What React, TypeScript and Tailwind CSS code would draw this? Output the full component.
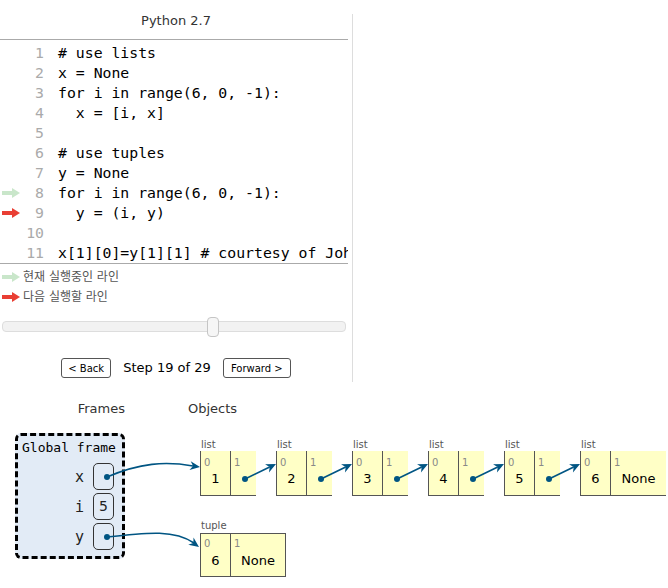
import React from "react";

const GREEN = "#c9e6ca";
const RED = "#e93f34";
const LINK = "#005583";

const codeLines = [
  "# use lists",
  "x = None",
  "for i in range(6, 0, -1):",
  "  x = [i, x]",
  "",
  "# use tuples",
  "y = None",
  "for i in range(6, 0, -1):",
  "  y = (i, y)",
  "",
  "x[1][0]=y[1][1] # courtesy of John DeNero",
];

// little arrow used in the gutter and the legend
const LineArrow = ({ color }: { color: string }) => (
  <svg width="18" height="10" viewBox="0 0 18 10">
    <rect x="0" y="3" width="11" height="4" fill={color} />
    <polygon points="10,0 18,5 10,10" fill={color} />
  </svg>
);

// arrowhead polygon, tip at (x, y), pointing along ang
const head = (x: number, y: number, ang: number) => {
  const c = Math.cos(ang);
  const s = Math.sin(ang);
  const p = (dx: number, dy: number) => `${x + dx * c - dy * s},${y + dx * s + dy * c}`;
  return `${p(0, 0)} ${p(-10, -4.5)} ${p(-7, 0)} ${p(-10, 4.5)}`;
};

const ListBox = ({ value, last }: { value: number; last?: boolean }) => (
  <div className="flex flex-col">
    <div className="h-[12px] pl-[1px] text-[10px] leading-[12px] text-[#555]">list</div>
    <div className="flex">
      <div className="box-border h-[45px] w-[30px] border-b border-l border-[#555] bg-[#ffffc6] pl-[3px] pt-[6px]">
        <div className="text-[10px] leading-[12px] text-[#888]">0</div>
        <div className="mt-[2px] pr-[3px] text-center text-[13px] leading-[16px] text-black">{value}</div>
      </div>
      <div
        className={
          last
            ? "box-border h-[45px] w-[56px] border-b border-l border-[#555] bg-[#ffffc6] pl-[3px] pt-[6px]"
            : "box-border h-[45px] w-[26px] border-b border-l border-[#555] bg-[#ffffc6] pl-[3px] pt-[6px]"
        }
      >
        <div className="text-[10px] leading-[12px] text-[#888]">1</div>
        {last && (
          <div className="mt-[2px] pr-[3px] text-center text-[13px] leading-[16px] text-black">None</div>
        )}
      </div>
    </div>
  </div>
);

const VarRow = ({ name, children }: { name: string; children?: React.ReactNode }) => (
  <div className="flex h-[27px] items-center justify-end">
    <div className="pr-[9px] font-['DejaVu_Sans_Mono',monospace] text-[15px] leading-[20px]">{name}</div>
    <div className="box-border flex h-[27px] w-[21px] items-center justify-center rounded-[5px] border border-[#333] text-[14px]">
      {children}
    </div>
  </div>
);

const App: React.FC = () => {
  const listXs = [200, 276, 352, 428, 504];

  return (
    <div className="relative h-[588px] w-[668px] overflow-hidden bg-white font-['DejaVu_Sans',Verdana,sans-serif] text-[#222]">
      {/* Code panel */}
      <div className="mt-[14px] w-[353px] border-r border-[#ddd] pb-[3px]">
        <div className="h-[25px] text-center text-[13px] leading-[13px] text-[#333]">Python 2.7</div>

        <div className="w-[348px] overflow-hidden border-y border-[#aaa] pt-[3px] font-['DejaVu_Sans_Mono',monospace] text-[14.8px]">
          {codeLines.map((ln, i) => (
            <div key={i} className="flex h-[20px] items-center whitespace-pre leading-[20px]">
              <div className="flex w-[22px] shrink-0 pl-[2px]">
                {i === 7 && <LineArrow color={GREEN} />}
                {i === 8 && <LineArrow color={RED} />}
              </div>
              <div className="w-[22px] shrink-0 text-right text-[#aaa]">{i + 1}</div>
              <div className="pl-[14px] text-black">{ln}</div>
            </div>
          ))}
        </div>

        {/* Legend */}
        <div className="mt-[3px] font-['DejaVu_Sans','Noto_Sans_CJK_KR',sans-serif] text-[12px] text-[#555]">
          <div className="flex h-[20px] items-center pl-[2px]">
            <LineArrow color={GREEN} />
            <span className="ml-[3px]">현재 실행중인 라인</span>
          </div>
          <div className="flex h-[20px] items-center pl-[2px]">
            <LineArrow color={RED} />
            <span className="ml-[3px]">다음 실행할 라인</span>
          </div>
        </div>

        {/* Slider */}
        <div className="relative mx-[2px] mt-[10px] h-[20px] w-[344px]">
          <div className="absolute left-0 right-0 top-[4px] h-[11px] rounded-[4px] border border-[#ddd] bg-[#f2f2f2]" />
          <div className="absolute left-[205px] top-0 h-[20px] w-[12px] rounded-[4px] border border-[#c5c5c5] bg-[#f6f6f6]" />
        </div>

        {/* Navigation */}
        <div className="mt-[20px] flex h-[22px] items-center justify-center gap-[12px]">
          <button className="h-[20px] w-[50px] rounded-[3px] border border-[#555] bg-white text-[10px] text-black">
            &lt; Back
          </button>
          <span className="text-[13px] text-black">Step 19 of 29</span>
          <button className="h-[20px] w-[68px] rounded-[3px] border border-[#555] bg-white text-[10px] text-black">
            Forward &gt;
          </button>
        </div>
      </div>

      {/* Frames and objects */}
      <div className="flex pt-[19px]">
        <div className="w-[125px] shrink-0 pl-[15px]">
          <div className="text-right text-[13px] leading-[16px] text-[#333]">Frames</div>
          <div className="mt-[16px] box-border rounded-[6px] border-[3px] border-dashed border-black bg-[#e2ebf6] pb-[6px] pl-[4px] pr-[8px] pt-[4px]">
            <div className="whitespace-nowrap font-['DejaVu_Sans_Mono',monospace] text-[13px] leading-[16px] text-black">
              Global frame
            </div>
            <div className="mt-[7px] flex flex-col gap-[3px]">
              <VarRow name="x" />
              <VarRow name="i">5</VarRow>
              <VarRow name="y" />
            </div>
          </div>
        </div>

        <div className="ml-[63px] shrink-0">
          <div className="text-[13px] leading-[16px] text-[#333]">Objects</div>
          <div className="mt-[22px] flex gap-[20px] pl-[12px]">
            <ListBox value={1} />
            <ListBox value={2} />
            <ListBox value={3} />
            <ListBox value={4} />
            <ListBox value={5} />
            <ListBox value={6} last />
          </div>
          <div className="mt-[24px] flex flex-col pl-[12px]">
            <div className="h-[13px] pl-[1px] text-[10px] leading-[12px] text-[#555]">tuple</div>
            <div className="flex">
              <div className="box-border h-[44px] w-[30px] border-y border-l border-[#555] bg-[#ffffc6] pl-[3px] pt-[4px]">
                <div className="text-[10px] leading-[12px] text-[#888]">0</div>
                <div className="mt-[3px] pr-[3px] text-center text-[13px] leading-[16px] text-black">6</div>
              </div>
              <div className="box-border h-[44px] w-[56px] border border-[#555] bg-[#ffffc6] pl-[3px] pt-[4px]">
                <div className="text-[10px] leading-[12px] text-[#888]">1</div>
                <div className="mt-[3px] pr-[3px] text-center text-[13px] leading-[16px] text-black">None</div>
              </div>
            </div>
          </div>
        </div>
      </div>

      {/* Pointer arrows drawn over the diagram */}
      <svg className="pointer-events-none absolute left-0 top-0" width="668" height="588">
        <circle cx="107" cy="477" r="3" fill={LINK} />
        <path d="M107,477 C140,463 165,461 193,466" stroke={LINK} strokeWidth="1.6" fill="none" />
        <polygon points={head(200, 467, Math.atan2(4, 28))} fill={LINK} />

        <circle cx="107" cy="537" r="3" fill={LINK} />
        <path d="M107,537 C150,532 175,530 194,543" stroke={LINK} strokeWidth="1.6" fill="none" />
        <polygon points={head(199, 547, Math.atan2(13, 18))} fill={LINK} />

        {listXs.map((x0) => {
          const ang = Math.atan2(464 - 479, 31);
          return (
            <g key={x0}>
              <circle cx={x0 + 45} cy={479} r="3" fill={LINK} />
              <line
                x1={x0 + 45}
                y1={479}
                x2={x0 + 76 - 7 * Math.cos(ang)}
                y2={464 - 7 * Math.sin(ang)}
                stroke={LINK}
                strokeWidth="1.6"
              />
              <polygon points={head(x0 + 76, 464, ang)} fill={LINK} />
            </g>
          );
        })}
      </svg>
    </div>
  );
};

export default App;
